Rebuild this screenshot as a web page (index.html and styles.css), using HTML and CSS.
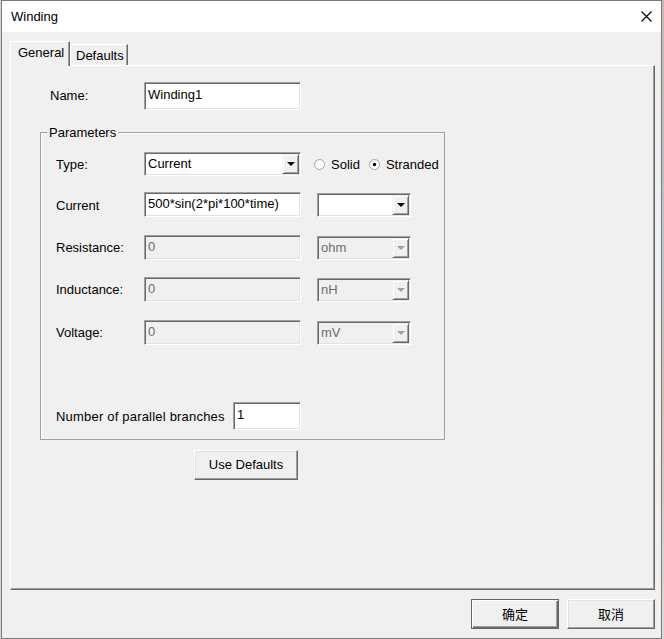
FILE: index.html
```html
<!DOCTYPE html>
<html>
<head>
<meta charset="utf-8">
<link rel="stylesheet" href="styles.css">
</head>
<body>
<div class="screen">
  <div class="window">
    <div class="titlebar">
      <span class="title">Winding</span>
      <svg class="close" width="11" height="11" viewBox="0 0 11 11"><path d="M0.5 0.5 L10.5 10.5 M10.5 0.5 L0.5 10.5" stroke="#000" stroke-width="1.1" fill="none"/></svg>
    </div>
    <div class="client">
      <div class="tabs">
        <div class="tab active">General</div>
        <div class="tab">Defaults</div>
      </div>
      <div class="panel">
        <div class="row name-row">
          <span class="name-label">Name:</span>
          <div class="field wide tall"><span class="val">Winding1</span></div>
        </div>
        <div class="group">
          <span class="group-title">Parameters</span>
          <div class="row r1">
            <span class="lbl">Type:</span>
            <div class="field wide combo"><span class="val">Current</span><span class="drop"><i class="tri"></i></span></div>
            <span class="radio"><svg width="11" height="11" viewBox="0 0 11 11"><circle cx="5.5" cy="5.5" r="5" fill="#fff" stroke="#a0a0a0"/><path d="M1.7 7.8 A4.5 4.5 0 0 1 7.8 1.7" stroke="#e3e3e3" fill="none"/></svg>Solid</span>
            <span class="radio r-second"><svg width="11" height="11" viewBox="0 0 11 11"><circle cx="5.5" cy="5.5" r="5" fill="#fff" stroke="#a0a0a0"/><path d="M1.7 7.8 A4.5 4.5 0 0 1 7.8 1.7" stroke="#e3e3e3" fill="none"/><circle cx="5.5" cy="5.5" r="1.7" fill="#000"/></svg>Stranded</span>
          </div>
          <div class="row r2">
            <span class="lbl">Current</span>
            <div class="field wide"><span class="val">500*sin(2*pi*100*time)</span></div>
            <div class="field unit combo"><span class="val"></span><span class="drop"><i class="tri"></i></span></div>
          </div>
          <div class="row r3">
            <span class="lbl">Resistance:</span>
            <div class="field wide disabled"><span class="val">0</span></div>
            <div class="field unit combo disabled"><span class="val">ohm</span><span class="drop"><i class="tri"></i></span></div>
          </div>
          <div class="row r4">
            <span class="lbl">Inductance:</span>
            <div class="field wide disabled"><span class="val">0</span></div>
            <div class="field unit combo disabled"><span class="val">nH</span><span class="drop"><i class="tri"></i></span></div>
          </div>
          <div class="row r5">
            <span class="lbl">Voltage:</span>
            <div class="field wide disabled"><span class="val">0</span></div>
            <div class="field unit combo disabled"><span class="val">mV</span><span class="drop"><i class="tri"></i></span></div>
          </div>
          <div class="row r6">
            <span class="lbl lbl-long">Number of parallel branches</span>
            <div class="field small tall"><span class="val">1</span></div>
          </div>
        </div>
        <div class="btn defaults-btn">Use Defaults</div>
      </div>
      <div class="footer">
        <div class="btn default">确定</div>
        <div class="btn">取消</div>
      </div>
    </div>
  </div>
  <div class="outside"></div>
</div>
</body>
</html>
```

FILE: styles.css
```css
* { box-sizing: border-box; }
html, body { margin: 0; padding: 0; }
body {
  width: 664px;
  height: 639px;
  overflow: hidden;
  background: #d8d8d8;
  font-family: "Liberation Sans", "Noto Sans CJK SC", sans-serif;
  font-size: 13px;
  color: #000;
}
.screen { display: flex; width: 664px; height: 639px; }
.window {
  margin-left: 1px;
  width: 661px;
  height: 639px;
  border: 1px solid #7a7a7a;
  display: flex;
  flex-direction: column;
  background: #f0f0f0;
}
.outside {
  flex: 1;
  background: linear-gradient(#c9b8b0, #b8c4d0 40%, #d4c0b4 60%, #dcdcdc);
}
.titlebar {
  height: 31px;
  background: #fff;
  display: flex;
  align-items: center;
  justify-content: space-between;
  padding: 0 9px 0 9px;
  flex: none;
}
.title { font-size: 13px; line-height: 16px; padding-top: 1px; }
.close { margin-top: -1px; }
.client {
  flex: 1;
  padding: 9px 6px 0 8px;
  display: flex;
  flex-direction: column;
}
.tabs {
  display: flex;
  align-items: flex-end;
  height: 24px;
}
.tab {
  height: 21px;
  padding: 0 4px 0 5px;
  line-height: 21px;
  border-top: 1px solid #fff;
  border-left: 1px solid #fff;
  border-right: 1px solid #696969;
  box-shadow: inset -1px 0 0 #a0a0a0;
  background: #f0f0f0;
}
.tab.active {
  height: 25px;
  width: 60px;
  margin-bottom: -1px;
  padding: 0 0 0 7px;
  line-height: 21px;
  position: relative;
  z-index: 1;
}
.tab:not(.active) { width: 58px; }
.panel {
  width: 645px;
  height: 525px;
  border-top: 1px solid #fff;
  border-left: 1px solid #fff;
  border-right: 1px solid #696969;
  border-bottom: 1px solid #696969;
  box-shadow: inset -1px -1px 0 #a0a0a0;
  padding: 16px 0 0 29px;
}
.row { display: flex; align-items: center; }
.name-row { height: 28px; }
.name-label { width: 104px; padding-left: 10px; padding-bottom: 2px; }
.field {
  background: #fff;
  border: 1px solid;
  border-color: #a0a0a0 #fff #fff #a0a0a0;
  box-shadow: inset 1px 1px 0 #696969, inset -1px -1px 0 #e3e3e3;
  height: 25px;
  display: flex;
  align-items: flex-start;
  position: relative;
}
.field .val { padding: 3px 0 0 3px; line-height: 16px; white-space: nowrap; }
.field.tall { height: 28px; }
.field.tall .val { padding-top: 4px; }
.wide { width: 157px; }
.unit { width: 94px; margin-left: 16px; height: 24px; }
.small { width: 68px; }
.combo { height: 24px; }
.combo .val { flex: 1; }
.drop {
  width: 17px;
  height: 20px;
  margin: 1px 1px 0 0;
  border: 1px solid;
  border-color: #f0f0f0 #696969 #696969 #f0f0f0;
  box-shadow: inset 1px 1px 0 #fff, inset -1px -1px 0 #a0a0a0;
  background: #f0f0f0;
  display: flex;
  align-items: center;
  justify-content: center;
}
.tri {
  display: block;
  width: 0; height: 0;
  border-left: 4px solid transparent;
  border-right: 4px solid transparent;
  border-top: 4px solid #000;
  margin-top: 1px;
}
.disabled { background: #f0f0f0; }
.disabled .val { color: #6d6d6d; }
.disabled .tri { border-top-color: #a0a0a0; }
.group {
  position: relative;
  width: 405px;
  height: 308px;
  margin-top: 22px;
  border: 1px solid #a0a0a0;
  box-shadow: 1px 1px 0 #fff inset;
  padding: 18px 0 0 15px;
}
.group-title {
  position: absolute;
  left: 6px;
  top: -8px;
  background: #f0f0f0;
  padding: 0 2px;
  line-height: 16px;
}
.group .row { height: 25px; }
.lbl { width: 88px; }
.lbl-long { width: 177px; letter-spacing: 0.2px; }
.r1 .lbl, .r1 .radio { padding-top: 2px; }
.r2 { margin-top: 16px; }
.r2 .lbl { padding-top: 1px; }
.r3 { margin-top: 18px; }
.r4 { margin-top: 17px; }
.r5 { margin-top: 18px; }
.r6 { margin-top: 57px; height: 28px !important; }
.radio { display: flex; align-items: center; margin-left: 13px; }
.radio svg { margin-right: 6px; }
.r-second { margin-left: 9px; }
.btn {
  height: 30px;
  width: 88px;
  display: flex;
  align-items: center;
  justify-content: center;
  border: 1px solid;
  border-color: #fff #696969 #696969 #fff;
  box-shadow: inset -1px -1px 0 #a0a0a0, inset 1px 1px 0 #e3e3e3;
  background: #f0f0f0;
  padding-bottom: 1px;
}
.btn.default {
  border: 1px solid #646464;
  box-shadow: inset 1px 1px 0 #fff, inset -1px -1px 0 #696969, inset -2px -2px 0 #a0a0a0;
}
.defaults-btn { width: 104px; margin: 10px 0 0 154px; }
.footer {
  display: flex;
  justify-content: flex-end;
  gap: 8px;
  margin-top: 9px;
}
```
